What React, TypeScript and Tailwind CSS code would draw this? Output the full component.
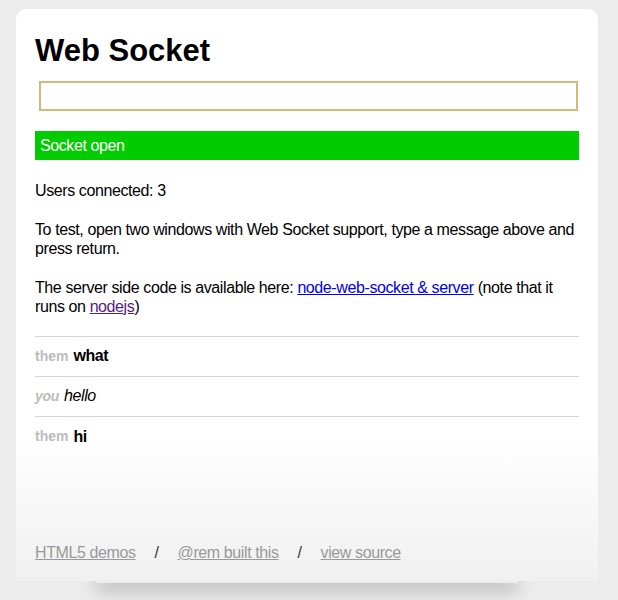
import React from "react";

const messages = [
  { who: "them", text: "what" },
  { who: "you", text: "hello" },
  { who: "them", text: "hi" },
];

const App = () => {
  return (
    <div className="min-h-[600px] bg-[#ececec] pt-[9px] font-['Liberation_Sans',Arial,sans-serif] text-[16px] tracking-[-0.4px] text-black">
      <div className="relative ml-[16px] w-[582px]">
        <div className="absolute bottom-[-2px] left-[80px] right-[80px] h-[20px] shadow-[0_10px_18px_rgba(0,0,0,0.18)]" />
        <div className="relative rounded-t-[10px] bg-gradient-to-b from-white from-[75%] to-[#f0f0f0] px-[19px] pt-[24px] pb-[18px] h-[572px]">
          <h1 className="text-[31px] font-bold leading-[36px] tracking-normal">Web Socket</h1>
          <input
            type="text"
            className="mt-[12px] ml-[4px] block h-[30px] w-[539px] border-2 border-[#d8b878] bg-white outline-none"
          />
          <div className="mt-[20px] h-[29px] bg-[#00cc00] pl-[5px] leading-[29px] text-white">Socket open</div>
          <p className="mt-[21px] leading-[19px]">Users connected: 3</p>
          <p className="mt-[20px] leading-[19px]">
            To test, open two windows with Web Socket support, type a message above and press return.
          </p>
          <p className="mt-[20px] leading-[19px]">
            The server side code is available here:{" "}
            <a href="#" className="text-[#0000ee] underline">node-web-socket &amp; server</a> (note that it runs on{" "}
            <a href="#" className="text-[#551a8b] underline">nodejs</a>)
          </p>
          <ul className="mt-[20px] border-t border-[#d4d4d4]">
            {messages.map((m, i) => (
              <li
                key={i}
                className={`flex h-[40px] items-center pb-[1px] border-[#d4d4d4] ${i < messages.length - 1 ? "border-b" : ""} ${m.who === "you" ? "italic" : "font-bold"}`}
              >
                <span
                  className={`mr-[5px] text-[14px] font-bold text-[#bbbbbb] ${m.who === "you" ? "tracking-[-0.3px]" : "tracking-normal"}`}
                >
                  {m.who}
                </span>
                <span className={m.who === "you" ? "font-normal" : ""}>{m.text}</span>
              </li>
            ))}
          </ul>
          <div className="mt-[84px] flex items-center text-[#999999]">
            <a href="#" className="underline">HTML5 demos</a>
            <span className="mx-[19px] text-[#333]">/</span>
            <a href="#" className="underline">@rem built this</a>
            <span className="mx-[19px] text-[#333]">/</span>
            <a href="#" className="underline">view source</a>
          </div>
        </div>
      </div>
    </div>
  );
};

export default App;
